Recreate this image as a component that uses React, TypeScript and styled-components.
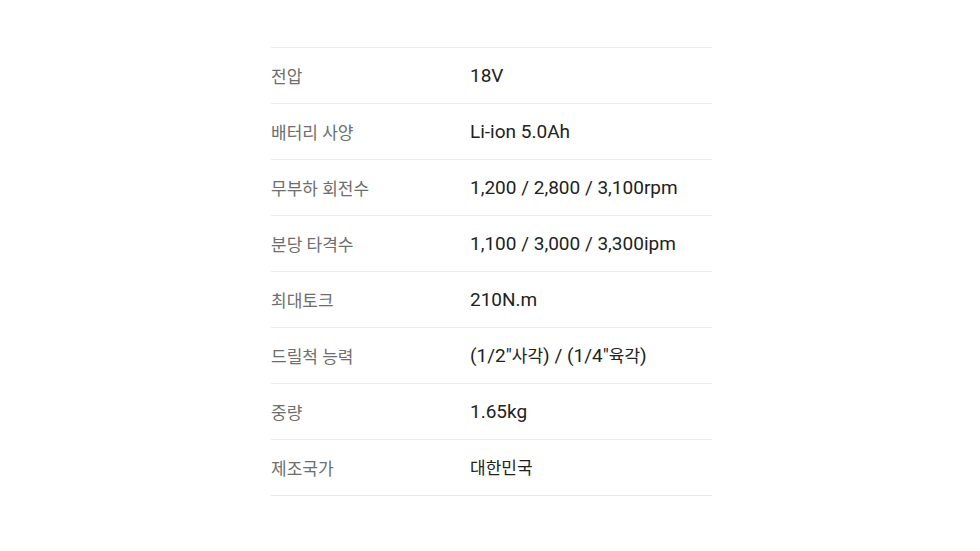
import React from "react";
import styled, { createGlobalStyle } from "styled-components";

const Global = createGlobalStyle`
  html, body { margin: 0; padding: 0; background: #fff; }
  body { font-family: Roboto, "Noto Sans CJK KR", sans-serif; }
`;

const Page = styled.div`
  padding: 47px 0 0 271px;
`;

const Table = styled.div`
  width: 441px;
  display: flex;
  flex-direction: column;
  border-bottom: 1px solid #e8e8e8;
`;

const Row = styled.div`
  display: grid;
  grid-template-columns: 199px 1fr;
  align-items: center;
  height: 56px;
  box-sizing: border-box;
  border-top: 1px solid #ececec;
`;

const Label = styled.div`
  font-family: Roboto, "Noto Sans CJK KR", sans-serif;
  font-size: 17px;
  color: #6e6e6e;
  line-height: 1;
  padding-top: 4px;
`;

const Value = styled.div`
  font-family: Roboto, "Noto Sans CJK KR", sans-serif;
  font-size: 19px;
  color: #222;
  line-height: 1;
`;

const Hangul = styled.span`
  font-size: 17px;
`;

const specs: [string, string][] = [
  ["전압", "18V"],
  ["배터리 사양", "Li-ion 5.0Ah"],
  ["무부하 회전수", "1,200 / 2,800 / 3,100rpm"],
  ["분당 타격수", "1,100 / 3,000 / 3,300ipm"],
  ["최대토크", "210N.m"],
  ["드릴척 능력", "(1/2\"사각) / (1/4\"육각)"],
  ["중량", "1.65kg"],
  ["제조국가", "대한민국"],
];

function renderValue(v: string) {
  return v.split(/([\uAC00-\uD7A3]+)/).map((part, i) =>
    /[\uAC00-\uD7A3]/.test(part) ? <Hangul key={i}>{part}</Hangul> : part
  );
}

export default function App() {
  return (
    <>
      <Global />
      <Page>
        <Table>
          {specs.map(([k, v]) => (
            <Row key={k}>
              <Label>{k}</Label>
              <Value>{renderValue(v)}</Value>
            </Row>
          ))}
        </Table>
      </Page>
    </>
  );
}
